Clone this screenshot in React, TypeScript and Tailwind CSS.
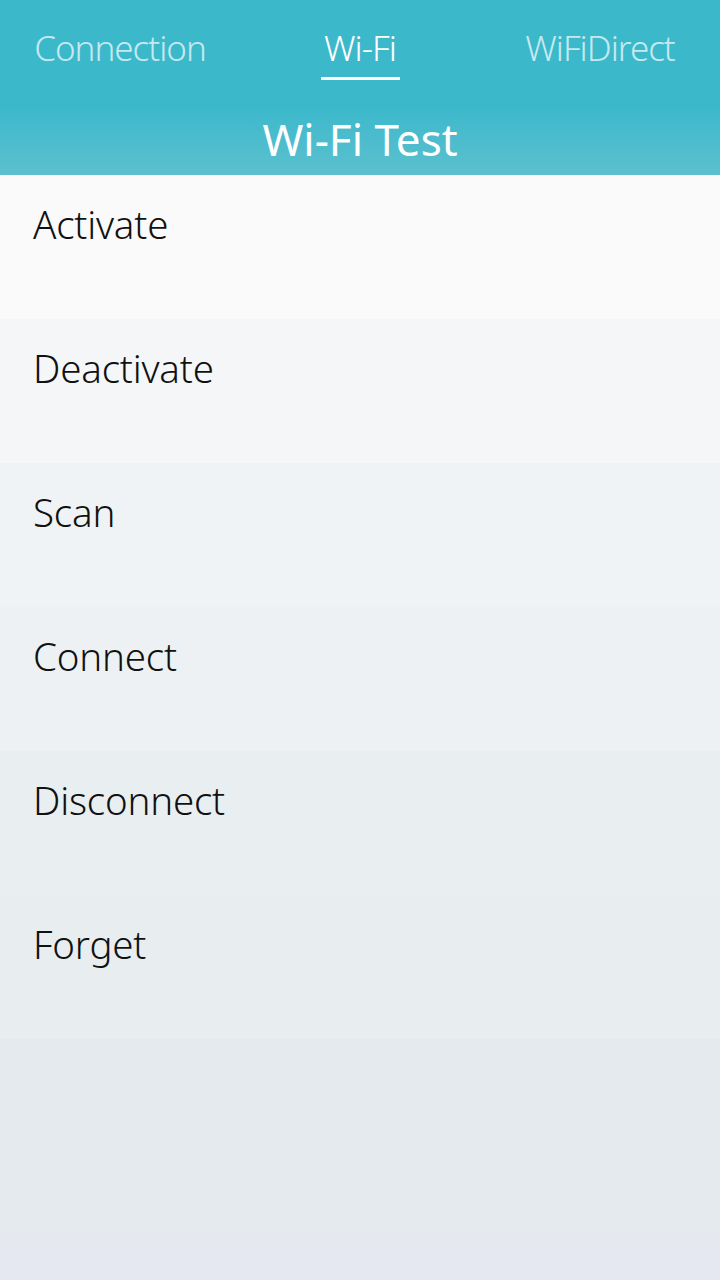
const tabs = ['Connection', 'Wi-Fi', 'WiFiDirect']

const items = [
  { label: 'Activate', bg: 'bg-[#fafafa]' },
  { label: 'Deactivate', bg: 'bg-[#f4f6f7]' },
  { label: 'Scan', bg: 'bg-[#f0f3f5]' },
  { label: 'Connect', bg: 'bg-[#edf1f3]' },
  { label: 'Disconnect', bg: 'bg-[#e9eef1]' },
  { label: 'Forget', bg: 'bg-[#e8edf0]' },
]

export default function App() {
  return (
    <div className="flex h-[1280px] w-[720px] flex-col overflow-hidden font-['Noto_Sans',sans-serif]">
      <div className="bg-[#3cb8cb]">
        <div className="grid h-[110px] grid-cols-3">
          {tabs.map((t) => {
            const active = t === 'Wi-Fi'
            return (
              <div key={t} className="flex justify-center pt-[24px]">
                <div className="flex flex-col items-center">
                  <span
                    className={
                      active
                        ? 'text-[35px] leading-[48px] font-light tracking-[-1px] text-white'
                        : 'text-[35px] leading-[48px] font-light tracking-[-1px] text-[#c6e9ef]'
                    }
                  >
                    {t}
                  </span>
                  {active && <div className="mt-[5px] h-[3px] w-[79px] bg-white" />}
                </div>
              </div>
            )
          })}
        </div>
        <div className="flex h-[65px] items-start justify-center bg-gradient-to-b from-[#3db9cc] to-[#5bc0ce]">
          <span className="text-[44px] leading-[58px] font-normal text-white">Wi-Fi Test</span>
        </div>
      </div>
      <div className="flex flex-col">
        {items.map((it) => (
          <div key={it.label} className={`h-[144px] px-[33px] pt-[24px] ${it.bg}`}>
            <span className="text-[38.5px] leading-[50px] font-light tracking-[-0.2px] text-[#111]">
              {it.label}
            </span>
          </div>
        ))}
      </div>
      <div className="flex flex-1 flex-col bg-[#e5eaee]">
        <div className="flex-1" />
        <div className="h-[47px] bg-[#e5e8f0]" />
      </div>
    </div>
  )
}
